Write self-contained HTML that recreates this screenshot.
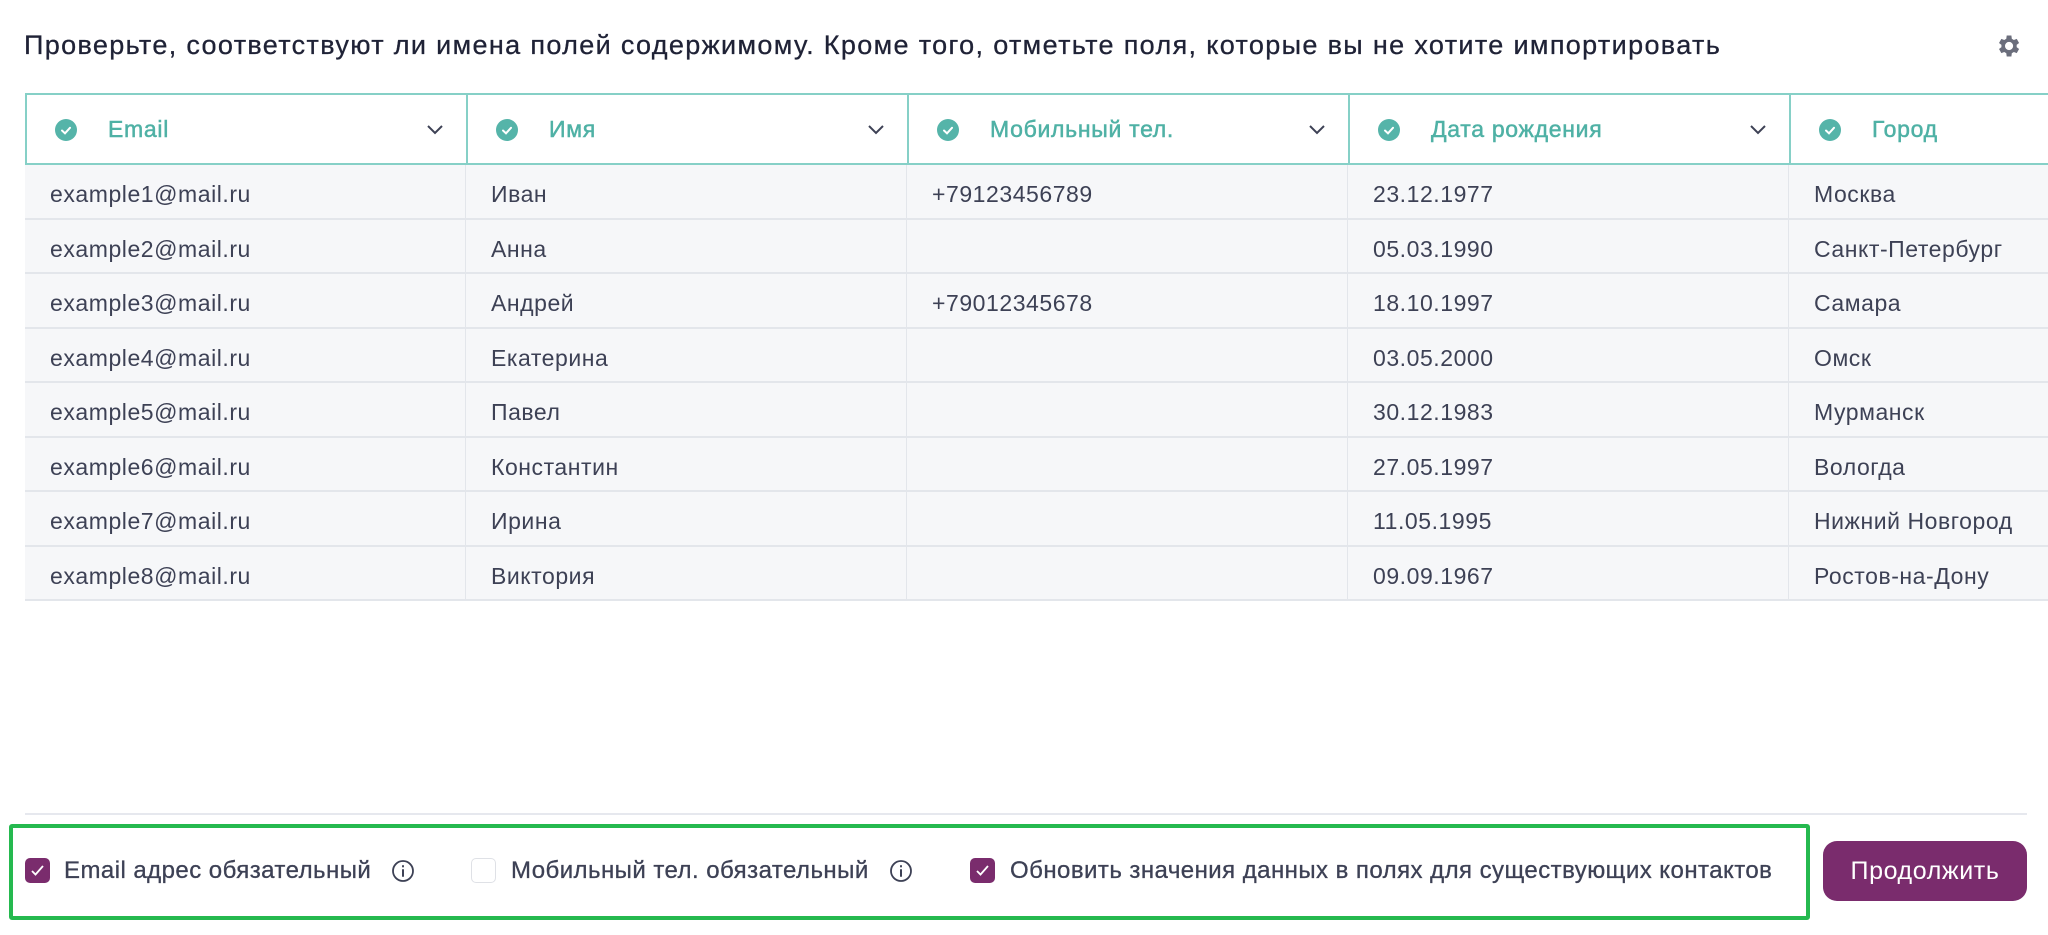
<!DOCTYPE html>
<html><head><meta charset="utf-8"><style>
*{box-sizing:border-box;margin:0;padding:0}
body{width:2048px;height:935px;background:#fff;font-family:"Liberation Sans",sans-serif;position:relative;overflow:hidden;color:#3d4155}
.title{position:absolute;left:24px;top:30px;font-size:27px;color:#1f2236;letter-spacing:1.35px;white-space:nowrap;-webkit-text-stroke:0.3px #1f2236}
.gear{position:absolute;left:1994px;top:32px}
.tbl{position:absolute;left:25px;top:93px;width:2100px}
.hdr{display:flex;height:72px;border:2px solid #86d0c7;border-right:none;background:#fff}
.hc{width:441px;border-right:2px solid #86d0c7;position:relative;flex:none}
.hc .ck{position:absolute;left:28px;top:24px;width:22px;height:22px;border-radius:50%;background:#55b4a9}
.hc .lb{position:absolute;left:81px;top:21px;font-size:23px;color:#4fb1a5;letter-spacing:0.7px;-webkit-text-stroke:0.5px #4fb1a5}
.hc .chv{position:absolute;left:398px;top:24px}
.row{display:flex;height:54.5px;background:#f6f7f9;border-bottom:2px solid #e3e6eb}
.c{width:441px;flex:none;border-right:1.5px solid #e3e6eb;padding-left:25px;font-size:23px;line-height:58px;color:#3d4155;letter-spacing:0.55px;white-space:nowrap;overflow:hidden}
.sep{position:absolute;left:25px;top:813px;width:2002px;height:2px;background:#e6e8ee}
.green{position:absolute;left:9px;top:824px;width:1801px;height:96px;border:4px solid #25b94f;border-radius:3px}
.cb{position:absolute;top:858px;width:25px;height:25px;border-radius:5px}
.cb.on{background:#7a2c6d}
.cb.off{border:1.5px solid #dfe1e6;background:#fff}
.lab{position:absolute;top:857px;font-size:24px;color:#3d4155;letter-spacing:0.45px;white-space:nowrap;-webkit-text-stroke:0.3px #3d4155}
.info{position:absolute;top:859px}
.btn{position:absolute;left:1823px;top:841px;width:204px;height:60px;border-radius:14px;background:#7a2c6d;color:#fff;font-size:25px;text-align:center;line-height:60px;letter-spacing:0.6px}
</style></head><body>
<div class="title">Проверьте, соответствуют ли имена полей содержимому. Кроме того, отметьте поля, которые вы не хотите импортировать</div>
<svg class="gear" width="28" height="28" viewBox="0 0 24 24"><path fill="#6b6e7c" d="M19.4 13a7.5 7.5 0 000-2l2.1-1.6-2-3.5-2.5 1a7.4 7.4 0 00-1.7-1L14.9 3h-4l-.4 2.9a7.4 7.4 0 00-1.7 1l-2.5-1-2 3.5L6.4 11a7.5 7.5 0 000 2l-2.1 1.6 2 3.5 2.5-1a7.4 7.4 0 001.7 1l.4 2.9h4l.4-2.9a7.4 7.4 0 001.7-1l2.5 1 2-3.5zM12.9 15.5a3.5 3.5 0 110-7 3.5 3.5 0 010 7z"/></svg>
<div class="tbl">
<div class="hdr">
<div class="hc"><div class="ck"><svg width="22" height="22" viewBox="0 0 22 22"><path d="M7 11.5l3 2.8 5-5.5" stroke="#fff" stroke-width="2" fill="none" stroke-linecap="round"/></svg></div><div class="lb">Email</div><svg class="chv" width="20" height="20" viewBox="0 0 20 20"><path d="M3 7l7 7 7-7" stroke="#3d4155" stroke-width="2" fill="none"/></svg></div>
<div class="hc"><div class="ck"><svg width="22" height="22" viewBox="0 0 22 22"><path d="M7 11.5l3 2.8 5-5.5" stroke="#fff" stroke-width="2" fill="none" stroke-linecap="round"/></svg></div><div class="lb">Имя</div><svg class="chv" width="20" height="20" viewBox="0 0 20 20"><path d="M3 7l7 7 7-7" stroke="#3d4155" stroke-width="2" fill="none"/></svg></div>
<div class="hc"><div class="ck"><svg width="22" height="22" viewBox="0 0 22 22"><path d="M7 11.5l3 2.8 5-5.5" stroke="#fff" stroke-width="2" fill="none" stroke-linecap="round"/></svg></div><div class="lb">Мобильный тел.</div><svg class="chv" width="20" height="20" viewBox="0 0 20 20"><path d="M3 7l7 7 7-7" stroke="#3d4155" stroke-width="2" fill="none"/></svg></div>
<div class="hc"><div class="ck"><svg width="22" height="22" viewBox="0 0 22 22"><path d="M7 11.5l3 2.8 5-5.5" stroke="#fff" stroke-width="2" fill="none" stroke-linecap="round"/></svg></div><div class="lb">Дата рождения</div><svg class="chv" width="20" height="20" viewBox="0 0 20 20"><path d="M3 7l7 7 7-7" stroke="#3d4155" stroke-width="2" fill="none"/></svg></div>
<div class="hc"><div class="ck"><svg width="22" height="22" viewBox="0 0 22 22"><path d="M7 11.5l3 2.8 5-5.5" stroke="#fff" stroke-width="2" fill="none" stroke-linecap="round"/></svg></div><div class="lb">Город</div></div>
</div>
<div class="row"><div class="c">example1@mail.ru</div><div class="c">Иван</div><div class="c">+79123456789</div><div class="c">23.12.1977</div><div class="c">Москва</div></div>
<div class="row"><div class="c">example2@mail.ru</div><div class="c">Анна</div><div class="c"></div><div class="c">05.03.1990</div><div class="c">Санкт-Петербург</div></div>
<div class="row"><div class="c">example3@mail.ru</div><div class="c">Андрей</div><div class="c">+79012345678</div><div class="c">18.10.1997</div><div class="c">Самара</div></div>
<div class="row"><div class="c">example4@mail.ru</div><div class="c">Екатерина</div><div class="c"></div><div class="c">03.05.2000</div><div class="c">Омск</div></div>
<div class="row"><div class="c">example5@mail.ru</div><div class="c">Павел</div><div class="c"></div><div class="c">30.12.1983</div><div class="c">Мурманск</div></div>
<div class="row"><div class="c">example6@mail.ru</div><div class="c">Константин</div><div class="c"></div><div class="c">27.05.1997</div><div class="c">Вологда</div></div>
<div class="row"><div class="c">example7@mail.ru</div><div class="c">Ирина</div><div class="c"></div><div class="c">11.05.1995</div><div class="c">Нижний Новгород</div></div>
<div class="row"><div class="c">example8@mail.ru</div><div class="c">Виктория</div><div class="c"></div><div class="c">09.09.1967</div><div class="c">Ростов-на-Дону</div></div>
</div>
<div class="sep"></div>
<div class="green"></div>
<div class="cb on" style="left:25px"><svg width="25" height="25" viewBox="0 0 25 25"><path d="M7 13l3.5 3.5L18 8" stroke="#fff" stroke-width="1.8" fill="none"/></svg></div>
<div class="lab" style="left:64px">Email адрес обязательный</div>
<svg class="info" style="left:391px" width="24" height="24" viewBox="0 0 24 24"><circle cx="12" cy="12" r="10" stroke="#3d4155" stroke-width="1.8" fill="none"/><path d="M12 11v6M12 7v.5" stroke="#3d4155" stroke-width="2" stroke-linecap="round"/></svg>
<div class="cb off" style="left:471px"></div>
<div class="lab" style="left:511px">Мобильный тел. обязательный</div>
<svg class="info" style="left:889px" width="24" height="24" viewBox="0 0 24 24"><circle cx="12" cy="12" r="10" stroke="#3d4155" stroke-width="1.8" fill="none"/><path d="M12 11v6M12 7v.5" stroke="#3d4155" stroke-width="2" stroke-linecap="round"/></svg>
<div class="cb on" style="left:970px"><svg width="25" height="25" viewBox="0 0 25 25"><path d="M7 13l3.5 3.5L18 8" stroke="#fff" stroke-width="1.8" fill="none"/></svg></div>
<div class="lab" style="left:1010px">Обновить значения данных в полях для существующих контактов</div>
<div class="btn">Продолжить</div>
</body></html>
